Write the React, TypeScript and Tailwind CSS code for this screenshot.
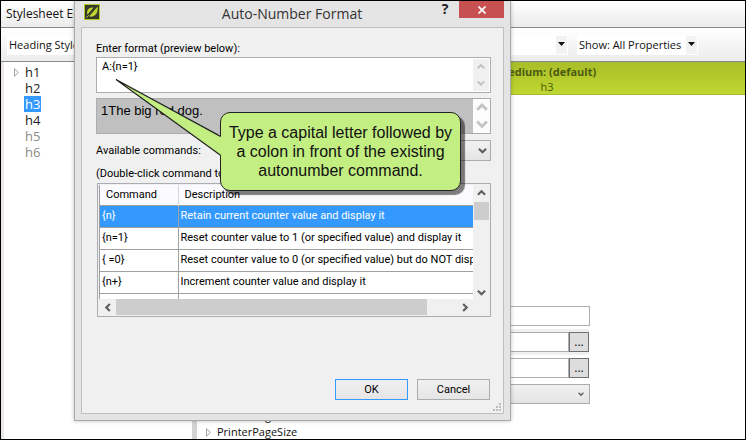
import React from "react";

type Direction = "up" | "down" | "left" | "right";

const chevrons: Record<Direction, string> = {
  up: "M1 6.5 L5 2.5 L9 6.5",
  down: "M1 3 L5 7 L9 3",
  left: "M6.5 1 L2.5 5 L6.5 9",
  right: "M3.5 1 L7.5 5 L3.5 9",
};

function Chevron({ dir, size = 10, color = "#606060" }: { dir: Direction; size?: number; color?: string }) {
  return (
    <svg width={size} height={size} viewBox="0 0 10 10" fill="none" stroke={color} strokeWidth="2.4" aria-hidden="true">
      <path d={chevrons[dir]} />
    </svg>
  );
}

function Expander() {
  return (
    <svg width="5" height="9" viewBox="0 0 5 9" fill="#fff" stroke="#a0a0a0" aria-hidden="true">
      <path d="M0.5 0.8 L4.4 4.5 L0.5 8.2 Z" />
    </svg>
  );
}

function ToolbarSelect({ label, value, className }: { label: string; value: string; className: string }) {
  return (
    <div className={`grid h-5 items-center bg-white ${className}`}>
      <select aria-label={label} className="col-start-1 row-start-1 h-5 w-full appearance-none bg-transparent px-0.5 leading-5 outline-none">
        <option>{value}</option>
      </select>
      <span className="pointer-events-none col-start-1 row-start-1 mr-px flex h-[18px] w-[11px] justify-center justify-self-end bg-[#f2f2f2] pt-1.5">
        <svg width="7" height="4" viewBox="0 0 7 4" aria-hidden="true">
          <path d="M0 0 H7 L3.5 4 Z" fill="#111" />
        </svg>
      </span>
    </div>
  );
}

const styles = ["h1", "h2", "h3", "h4", "h5", "h6"];

function StyleTree() {
  return (
    <ul className="flex w-[191px] shrink-0 flex-col border-l-[3px] border-[#ede8e8] bg-white pt-0.5">
      {styles.map((name, i) => (
        <li key={name} className="flex h-4 items-center pl-2.5">
          <span className="w-2.5">{i === 0 && <Expander />}</span>
          <span
            className={`h-4 px-px text-[13px] leading-4 ${
              name === "h3" ? "bg-[#3399ff] text-white" : i > 3 ? "text-[#8a8a8a]" : "text-[#222]"
            }`}
          >
            {name}
          </span>
        </li>
      ))}
    </ul>
  );
}

function BrowseField({ label, shaded }: { label: string; shaded?: boolean }) {
  return (
    <div className={`flex h-[26px] w-[392px] items-center ${shaded ? "bg-[#f0f0f0]" : ""}`}>
      <input aria-label={label} className="h-5 min-w-0 flex-1 border border-[#abadb3] bg-white" />
      <button className="h-5 w-5 border border-[#707070] bg-[#dddddd] text-xs leading-4" aria-label={`Browse ${label}`}>
        ...
      </button>
    </div>
  );
}

function PropertiesPane() {
  return (
    <section className="flex min-w-0 flex-1 flex-col bg-white">
      <header className="h-[33px] border-y border-[#a5ba35] bg-linear-to-b from-[#aabf28] to-[#bfd730] pl-[300px] text-[#4a5a10]">
        <div className="flex w-[100px] flex-col items-center">
          <strong className="text-[11px] leading-[17px] whitespace-nowrap">Medium: (default)</strong>
          <span className="text-[11px] leading-[14px]">h3</span>
        </div>
      </header>
      <div className="mt-auto flex flex-col">
        <input aria-label="Value" className="h-5 w-[393px] border border-[#abadb3] bg-white" />
        <div className="mt-[3px] flex flex-col">
          <BrowseField label="Left value" shaded />
          <BrowseField label="Right value" />
        </div>
        <div className="mt-[3px] grid w-[393px] items-center">
          <select aria-label="Page option" className="col-start-1 row-start-1 h-5 w-full appearance-none border border-[#acacac] bg-linear-to-b from-[#f0f0f0] to-[#e4e4e4]" />
          <span className="pointer-events-none col-start-1 row-start-1 mr-1.5 justify-self-end">
            <Chevron dir="down" size={6} />
          </span>
        </div>
        <div className="mt-[3px] flex flex-col pl-[9px] text-[11px] leading-4">
          {["PrinterPages", "PrinterPageSize"].map((name) => (
            <div key={name} className="flex h-4 items-center gap-1.5 pt-0.5">
              <Expander />
              <span>{name}</span>
            </div>
          ))}
        </div>
      </div>
    </section>
  );
}

const commands: [string, string][] = [
  ["{n}", "Retain current counter value and display it"],
  ["{n=1}", "Reset counter value to 1 (or specified value) and display it"],
  ["{ =0}", "Reset counter value to 0 (or specified value) but do NOT display it"],
  ["{n+}", "Increment counter value and display it"],
  ["", ""],
];

function CommandList() {
  return (
    <div className="ml-px flex h-[134px] flex-col border border-[#abadb3] bg-[#f0f0f0] p-px">
      <div className="flex min-h-0 flex-1">
        <div className="min-w-0 flex-1 overflow-hidden border-l border-[#a0a0a0] bg-white">
          <table className="w-full table-fixed border-collapse text-left">
            <thead>
              <tr className="h-5 border-b border-[#a0a0a0] bg-[#fbfbfd]">
                <th className="w-[78px] border-r border-[#d8d8dc] p-0 pl-1.5 font-normal">Command</th>
                <th className="p-0 pl-1.5 font-normal">Description</th>
              </tr>
            </thead>
            <tbody>
              {commands.map(([command, description], i) => (
                <tr key={i} className={`h-[22px] border-b border-[#a0a0a0] ${i === 0 ? "bg-[#3399ff] text-white" : ""}`}>
                  <td className="border-r border-[#a0a0a0] p-0 pl-0.5">{command}</td>
                  <td className="overflow-hidden p-0 pl-0.5 whitespace-nowrap">{description}</td>
                </tr>
              ))}
            </tbody>
          </table>
        </div>
        <div className="flex w-4 flex-col items-center pt-1 pb-0.5">
          <Chevron dir="up" size={9} />
          <span className="mt-1 h-[18px] w-[15px] bg-[#cdcdcd]" />
          <span className="mt-auto">
            <Chevron dir="down" size={9} />
          </span>
        </div>
      </div>
      <div className="flex h-4 items-center pr-5 pl-[5px]">
        <Chevron dir="left" size={9} />
        <span className="ml-[3px] h-4 w-[311px] bg-[#cdcdcd]" />
        <span className="ml-auto">
          <Chevron dir="right" size={9} />
        </span>
      </div>
    </div>
  );
}

function Callout() {
  return (
    <aside className="absolute top-[111px] left-[219px] w-[241px]">
      <div className="rounded-[10px] border border-[#222] bg-[#c3ee82] px-1 py-[10px] text-center font-['Liberation_Sans',Arial,sans-serif] text-base leading-[19px] whitespace-nowrap text-[#111] shadow-[4px_4px_1px_rgba(0,0,0,0.5)]">
        Type a capital letter followed by
        <br />a colon in front of the existing
        <br />
        autonumber command.
      </div>
      <svg className="absolute -top-[34px] -left-[105px]" width="107" height="80" viewBox="0 0 107 80" aria-hidden="true">
        <path d="M106.5 59 L1 1.5 L106.5 78 Z" fill="#c3ee82" />
        <path d="M105.5 58.4 L1 1.5 L105.5 77.3" fill="none" stroke="#222" strokeWidth="1.2" />
      </svg>
    </aside>
  );
}

function AutoNumberDialog() {
  return (
    <div
      role="dialog"
      aria-label="Auto-Number Format"
      className="absolute top-0 left-[73px] flex w-[437px] flex-col border border-t-0 border-[#a9a9a9] bg-[#e4e4e4] px-1.5 pb-1.5 shadow-[0_0_4px_rgba(0,0,0,0.25)]"
    >
      <header className="flex h-[26px] items-start pl-[3px]">
        <svg className="mt-[3px]" width="16" height="16" viewBox="0 0 16 16" aria-hidden="true">
          <rect x="0.5" y="0.5" width="15" height="15" fill="#343a2c" stroke="#b5c92c" />
          <path d="M3.4 10.8 C1.8 6 5.5 2.6 9.6 3.6 Z" fill="#c3d52f" />
          <path d="M13.6 2.4 C14.6 8.6 11 13.6 5 12.6 Z" fill="#c3d52f" />
          <path d="M2.4 13.6 L11.6 3" stroke="#343a2c" strokeWidth="0.8" />
          <path d="M2.4 13.6 L4.8 11.2" stroke="#c3d52f" />
        </svg>
        <h1 className="flex-1 pl-[53px] text-center text-sm leading-[25px] text-[#333]">Auto-Number Format</h1>
        <button aria-label="Help" className="w-7 text-sm leading-[15px] font-bold text-[#222]">
          ?
        </button>
        <button aria-label="Close" className="flex h-[17px] w-[45px] items-center justify-center bg-[#c75050]">
          <svg width="8" height="8" viewBox="0 0 8 8" stroke="#fff" strokeWidth="1.7" aria-hidden="true">
            <path d="M0.5 0.5 L7.5 7.5 M7.5 0.5 L0.5 7.5" />
          </svg>
        </button>
      </header>

      <div className="flex flex-col border border-[#bfbfbf] bg-[#f0f0f0] pt-[13px] pr-0.5 pb-0.5 pl-3.5 font-[Roboto,'Open_Sans',sans-serif] text-[11px] leading-4 text-black">
        <div className="mr-2.5 flex flex-col">
          <label htmlFor="format">Enter format (preview below):</label>
          <div className="flex h-9 border border-[#abadb3] bg-white p-px">
            <textarea id="format" defaultValue="A:{n=1}" className="min-w-0 flex-1 resize-none overflow-hidden px-1 leading-4 outline-none" />
            <div className="flex w-4 flex-col items-center justify-between bg-[#f0f0f0] py-1">
              <Chevron dir="up" size={8} color="#bfbfbf" />
              <Chevron dir="down" size={8} color="#bfbfbf" />
            </div>
          </div>
          <div className="mt-[5px] flex h-9 border border-[#abadb3] bg-[#c0c0c0]">
            <output className="flex-1 pt-1 pl-1 font-['Liberation_Sans',Arial,sans-serif] text-[13px] leading-4">1The big red dog.</output>
            <div className="flex w-[17px] flex-col items-center justify-between bg-[#fcfcfc] py-[3px]">
              <Chevron dir="up" size={12} color="#c4c4c4" />
              <Chevron dir="down" size={12} color="#c4c4c4" />
            </div>
          </div>
          <div className="mt-1.5 flex items-center">
            <label htmlFor="commands" className="flex-1">
              Available commands:
            </label>
            <div className="grid w-[265px] items-center">
              <select id="commands" className="col-start-1 row-start-1 h-[21px] w-full appearance-none border border-[#acacac] bg-linear-to-b from-[#f2f2f2] to-[#e4e4e4]" />
              <span className="pointer-events-none col-start-1 row-start-1 mr-1 justify-self-end">
                <Chevron dir="down" size={9} />
              </span>
            </div>
          </div>
          <p className="mt-[5px] mb-px">(Double-click command to add it)</p>
          <CommandList />
          <div className="mt-[62px] mr-px flex justify-end gap-[9px]">
            <button className="h-[21px] w-[73px] border border-[#3399ff] bg-linear-to-b from-[#f0f0f0] to-[#e5e5e5] leading-[19px]">OK</button>
            <button className="h-[21px] w-[73px] border border-[#acacac] bg-linear-to-b from-[#f0f0f0] to-[#e5e5e5] leading-[19px]">Cancel</button>
          </div>
        </div>
        <svg className="mt-[3px] self-end" width="8" height="8" viewBox="0 0 8 8" fill="#bcbcbc" aria-hidden="true">
          <path d="M6 0h2v2h-2z M3 3h2v2h-2z M6 3h2v2h-2z M0 6h2v2h-2z M3 6h2v2h-2z M6 6h2v2h-2z" />
        </svg>
      </div>
    </div>
  );
}

export default function App() {
  return (
    <main className="relative flex h-screen w-full flex-col overflow-hidden border border-black bg-white font-['Open_Sans','Noto_Sans',sans-serif] text-[#111]">
      <div className="h-[27px] shrink-0 border-b border-[#8a8a8a] bg-linear-to-b from-white to-[#ececec] pl-[5px] text-xs leading-[26px]">Stylesheet Editor</div>
      <div className="flex h-[34px] shrink-0 items-center gap-[9px] border-b border-[#8a8a8a] bg-linear-to-b from-white to-[#ececec] pl-1.5 text-[11px]">
        <ToolbarSelect label="Style group" value="Heading Styles" className="w-[561px]" />
        <ToolbarSelect label="Property filter" value="Show: All Properties" className="w-[121px]" />
      </div>
      <div className="flex min-h-0 flex-1">
        <StyleTree />
        <div className="w-[5px] shrink-0 bg-[#d4d4d4]" />
        <PropertiesPane />
      </div>
      <AutoNumberDialog />
      <Callout />
    </main>
  );
}
